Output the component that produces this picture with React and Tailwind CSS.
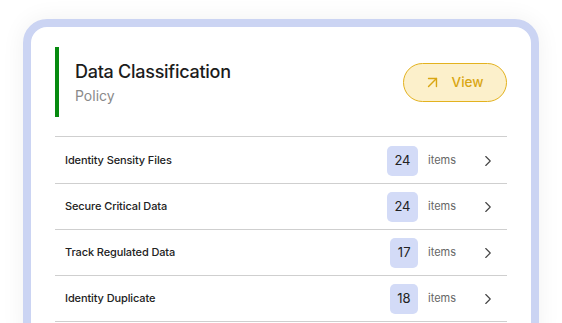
import React from 'react';
import { ArrowUpRight, ChevronRight } from 'lucide-react';

const rows = [
  { name: 'Identity Sensity Files', count: 24 },
  { name: 'Secure Critical Data', count: 24 },
  { name: 'Track Regulated Data', count: 17 },
  { name: 'Identity Duplicate', count: 18 },
];

function App() {
  return (
    <div className="min-h-screen bg-white px-[23px] pt-[19px]" style={{ fontFamily: 'Inter, "Noto Sans", sans-serif' }}>
      <div className="rounded-[24px] border-8 border-[#cbd4f3] bg-white shadow-[0_0_24px_rgba(0,0,0,0.06)] px-6 pt-5 pb-6">
        {/* Header */}
        <div className="flex items-center justify-between">
          <div className="flex h-[70px] flex-col justify-center border-l-4 border-[#068a0f] pl-4">
            <h1 className="text-[18px] leading-7 font-medium tracking-[-0.015em] text-[#1c1c1c]">Data Classification</h1>
            <p className="text-sm text-[#8a8a8a]">Policy</p>
          </div>
          <button className="flex h-[39px] w-[104px] items-center justify-center gap-[10px] rounded-full border border-[#e3b21f] bg-[#fcf0cb] pr-1 text-[13.5px] font-medium text-[#d9a614]">
            <ArrowUpRight size={19} strokeWidth={1.8} />
            <span>View</span>
          </button>
        </div>

        {/* Rows */}
        <div className="mt-[19px] border-t border-[#cfcfcf] pt-px">
          {rows.map((row) => (
            <div key={row.name} className="flex h-[46px] items-center border-b border-[#cfcfcf] px-[10px]">
              <span className="flex-1 text-[11px] font-medium tracking-[-0.01em] text-[#222]">{row.name}</span>
              <span className="flex h-[30px] items-center rounded-[5px] bg-[#d3dbf7] px-[7.5px] text-[13px] text-[#222]">{row.count}</span>
              <span className="ml-[10px] w-[51px] text-[11px] text-[#666]">items</span>
              <ChevronRight size={18} strokeWidth={1.5} className="text-[#444]" />
            </div>
          ))}
        </div>
      </div>
    </div>
  );
}

export default App;
